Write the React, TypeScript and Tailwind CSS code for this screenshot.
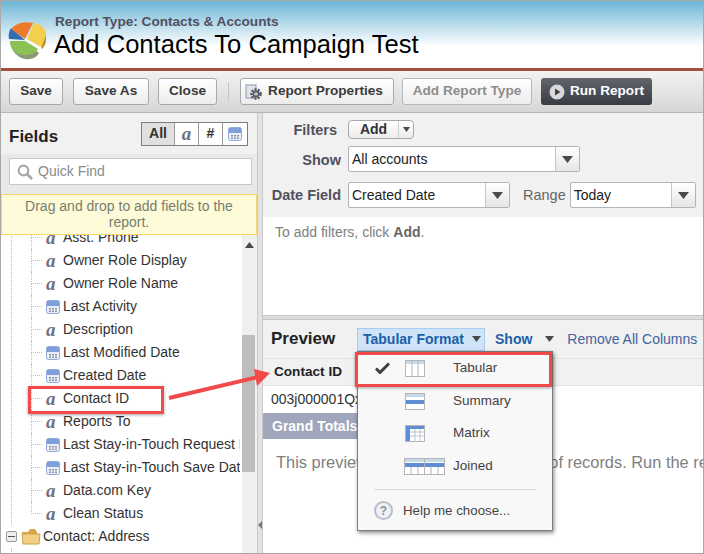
import { ReactNode } from "react";

const fields: { name: string; kind: "text" | "date" }[] = [
  { name: "Asst. Phone", kind: "text" },
  { name: "Owner Role Display", kind: "text" },
  { name: "Owner Role Name", kind: "text" },
  { name: "Last Activity", kind: "date" },
  { name: "Description", kind: "text" },
  { name: "Last Modified Date", kind: "date" },
  { name: "Created Date", kind: "date" },
  { name: "Contact ID", kind: "text" },
  { name: "Reports To", kind: "text" },
  { name: "Last Stay-in-Touch Request Date", kind: "date" },
  { name: "Last Stay-in-Touch Save Date", kind: "date" },
  { name: "Data.com Key", kind: "text" },
  { name: "Clean Status", kind: "text" },
];

function Caret({ className = "" }: { className?: string }) {
  return (
    <svg width="11" height="7" viewBox="0 0 11 7" className={className}>
      <path d="M0 0h11L5.5 7z" fill="#4a4a4a" />
    </svg>
  );
}

function TextIcon() {
  return (
    <span className="font-['Liberation_Serif',serif] text-[19px] leading-none font-bold italic text-[#6d7280]">
      a
    </span>
  );
}

function DateIcon({ size = 14 }: { size?: number }) {
  return (
    <svg width={size} height={size} viewBox="0 0 14 14">
      <rect x="0.5" y="0.5" width="13" height="13" rx="2" fill="#e9eef7" stroke="#8fabdc" />
      <rect x="1" y="1" width="12" height="5" fill="#7f9fd8" />
      <path d="M3 8h2v1.500H3zM6 8h2v1.500H6zM9 8h2v1.500H9zM3 10.500h2V12H3zM6 10.500h2V12H6zM9 10.500h2V12H9z" fill="#8d96a6" />
    </svg>
  );
}

function PieLogo() {
  return (
    <svg width="40" height="39" viewBox="0 0 40 39">
      <path d="M18 22 3 21c1 9 8 16 15 17s12-2 14-6z" fill="#8a9a78" />
      <path d="M18 20 3 20c0 7 6 14 15 14s12-4 13-6z" fill="#8cc153" />
      <path d="M18 19 2 18c-1-4 0-8 2-11z" fill="#2f6fb0" />
      <path d="M18 18 4 8C9 2 17 0 26 2z" fill="#ee7a2c" />
      <path d="m20 18 7-16c7 1 12 6 12 11 0 5-2 10-5 13z" fill="#f4cf4e" />
      <path d="m34 27 5-13v5c0 4-2 7-4 9z" fill="#b99532" />
    </svg>
  );
}

function ToolButton({ children, disabled }: { children: ReactNode; disabled?: boolean }) {
  return (
    <button
      type="button"
      className={`flex h-[27px] w-full items-center justify-center gap-[6px] rounded-[3px] border bg-gradient-to-b from-white to-[#ececec] text-[13.6px] font-bold ${
        disabled ? "border-[#b9b9b9] text-[#8d8d8d]" : "border-[#a9a9a9] text-[#3a3a3a]"
      }`}
    >
      {children}
    </button>
  );
}

function Select({ value, width }: { value: string; width: string }) {
  return (
    <div className={`flex h-[26px] items-stretch rounded-[2px] border border-[#b4b4b4] bg-white ${width}`}>
      <span className="flex-1 pl-[3px] text-[14px] leading-[25px] text-[#222]">{value}</span>
      <span className="flex w-[24px] items-center justify-center border-l border-[#c4c4c4] bg-gradient-to-b from-white to-[#e6e6e6]">
        <Caret />
      </span>
    </div>
  );
}

function FieldRow({ name, kind, last }: { name: string; kind: "text" | "date"; last: boolean }) {
  return (
    <div className="flex h-[23px] items-stretch">
      <div className="flex w-[11px] shrink-0 flex-col">
        <div className="h-[12px] border-b border-l border-dotted border-[#bdbdbd]" />
        {!last && <div className="flex-1 border-l border-dotted border-[#bdbdbd]" />}
      </div>
      <div className="flex items-center gap-[3px] pl-[4px]">
        <span className="flex w-[14px] justify-start">{kind === "text" ? <TextIcon /> : <DateIcon />}</span>
        <span className="whitespace-nowrap text-[14px] text-[#333]">{name}</span>
      </div>
    </div>
  );
}

function TableIcon({ type }: { type: "tabular" | "summary" | "matrix" }) {
  return (
    <svg width="20" height="17" viewBox="0 0 20 17">
      <rect x="0.5" y="0.5" width="19" height="16" fill="#fff" stroke="#b5b5b5" />
      <rect x="1" y="1" width="18" height="3" fill="#c6dbe8" />
      {type === "tabular" && <path d="M7 1v15M13 1v15" stroke="#b5b5b5" />}
      {type === "summary" && <rect x="1" y="7" width="18" height="4" fill="#5f8dd6" />}
      {type === "matrix" && (
        <>
          <rect x="1" y="1" width="18" height="3" fill="#5f8dd6" />
          <rect x="1" y="4" width="4" height="12" fill="#5f8dd6" />
          <path d="M5 7h14M5 11h14M10 4v12M15 4v12" stroke="#b9c6d2" />
        </>
      )}
    </svg>
  );
}

function JoinedIcon() {
  return (
    <svg width="41" height="17" viewBox="0 0 41 17">
      <rect x="0.5" y="0.5" width="40" height="16" fill="#fff" stroke="#b5b5b5" />
      <rect x="1" y="1" width="39" height="3" fill="#c6dbe8" />
      <rect x="1" y="5" width="39" height="4" fill="#5f8dd6" />
      <path d="M7 9v8M14 9v8M20.500 0v17M27 9v8M34 9v8" stroke="#b5b5b5" />
    </svg>
  );
}

function MenuItem({ icon, label, height }: { icon: ReactNode; label: string; height: string }) {
  return (
    <div className={`flex items-center ${height}`}>
      <div className="flex w-[95px] shrink-0 justify-start pl-[47px]">{icon}</div>
      <span className="text-[13.5px] text-[#444]">{label}</span>
    </div>
  );
}

function FormatMenu() {
  return (
    <div className="absolute top-[350px] left-[356px] z-10 h-[180px] w-[196px] border border-[#7c7c7c] bg-[#f8f8f8] shadow-[1px_2px_4px_rgba(0,0,0,0.45)]">
      <div className="relative">
        <svg width="15" height="12" viewBox="0 0 15 12" className="absolute top-[10px] left-[17px]">
          <path d="M1 6.500 5 10.500 14 1.500" fill="none" stroke="#3c3c3c" strokeWidth="3" />
        </svg>
        <MenuItem icon={<TableIcon type="tabular" />} label="Tabular" height="h-[33px]" />
        <MenuItem icon={<TableIcon type="summary" />} label="Summary" height="h-[32px]" />
        <MenuItem icon={<TableIcon type="matrix" />} label="Matrix" height="h-[33px]" />
        <div className="flex h-[32px] items-center">
          <div className="w-[95px] shrink-0 pl-[46px]">
            <JoinedIcon />
          </div>
          <span className="text-[13.5px] text-[#444]">Joined</span>
        </div>
        <div className="mx-[16px] mt-[7px] border-t border-[#dcdcdc]" />
        <div className="mt-[11px] flex items-center gap-[10px] pl-[16px]">
          <span className="flex h-[19px] w-[19px] items-center justify-center rounded-full border-2 border-[#b9bed0] bg-[#f1f1f4] text-[12px] font-bold text-[#8a8fa3]">
            ?
          </span>
          <span className="text-[13.3px] text-[#444]">Help me choose...</span>
        </div>
      </div>
    </div>
  );
}

export default function App() {
  return (
    <div className="relative flex h-[554px] w-[704px] flex-col overflow-hidden border border-[#a8a8a8] bg-white font-['Liberation_Sans',Arial,sans-serif]">
      {/* page header */}
      <div className="flex h-[67px] shrink-0 items-center gap-[8px] bg-gradient-to-b from-[#69b6d5] via-white via-[68%] to-white pt-[12px] pl-[6px]">
        <PieLogo />
        <div className="-mt-[9px]">
          <div className="text-[13.6px] leading-[16px] font-bold text-[#50505f]">Report Type: Contacts &amp; Accounts</div>
          <div className="-ml-[1px] text-[25.6px] leading-[28px] text-black">Add Contacts To Campaign Test</div>
        </div>
      </div>
      <div className="h-[3px] shrink-0 bg-[#a5503f]" />

      {/* toolbar */}
      <div className="flex h-[42px] shrink-0 items-center border-b border-[#b5b5b5] bg-gradient-to-b from-[#f2f2f2] to-[#d6d6d6] pl-[8px]">
        <div className="w-[54px]"><ToolButton>Save</ToolButton></div>
        <div className="ml-[10px] w-[76px]"><ToolButton>Save As</ToolButton></div>
        <div className="ml-[9px] w-[59px]"><ToolButton>Close</ToolButton></div>
        <div className="mx-[11px] h-[18px] border-l border-[#c4c4c4]" />
        <div className="w-[154px]">
          <ToolButton>
            <svg width="17" height="16" viewBox="0 0 17 16">
              <rect x="1" y="1" width="10" height="13" fill="#dfe3ea" stroke="#8d97aa" />
              <circle cx="11" cy="10" r="4.500" fill="none" stroke="#55585f" strokeWidth="2.600" strokeDasharray="2 1.200" />
              <circle cx="11" cy="10" r="2.600" fill="none" stroke="#55585f" strokeWidth="1.600" />
            </svg>
            <span className="pr-[6px]">Report Properties</span>
          </ToolButton>
        </div>
        <div className="ml-[8px] w-[130px]"><ToolButton disabled>Add Report Type</ToolButton></div>
        <button
          type="button"
          className="ml-[9px] flex h-[27px] w-[111px] items-center justify-center gap-[5px] rounded-[3px] bg-gradient-to-b from-[#62656c] to-[#393c44] text-[13.6px] font-bold text-white"
        >
          <svg width="16" height="16" viewBox="0 0 16 16">
            <circle cx="8" cy="8" r="7.500" fill="#d9d9d9" />
            <path d="M6 4.500 11.500 8 6 11.500z" fill="#3e4047" />
          </svg>
          Run Report
        </button>
      </div>

      <div className="flex min-h-0 flex-1">
        {/* fields panel */}
        <div className="flex w-[256px] shrink-0 flex-col">
          <div className="flex h-[41px] shrink-0 items-center justify-between bg-[#f1f1f1] pr-[9px] pl-[8px]">
            <span className="pt-[7px] text-[17px] font-bold text-[#222]">Fields</span>
            <div className="flex h-[24px] border border-[#7e7e7e] bg-white text-[#333]">
              <span className="flex w-[32px] items-center justify-center bg-[#e0e0e0] text-[14px] font-bold">All</span>
              <span className="flex w-[24px] items-center justify-center border-l border-[#9a9a9a]"><TextIcon /></span>
              <span className="flex w-[24px] items-center justify-center border-l border-[#9a9a9a] text-[14px] font-bold">#</span>
              <span className="flex w-[25px] items-center justify-center border-l border-[#9a9a9a]"><DateIcon /></span>
            </div>
          </div>
          <div className="flex h-[40px] shrink-0 items-start bg-[#e9e9e9] pt-[4px] pr-[5px] pl-[8px]">
            <div className="flex h-[27px] w-full items-center gap-[5px] border border-[#c8c8c8] bg-white pl-[7px]">
              <svg width="16" height="16" viewBox="0 0 16 16">
                <circle cx="6.500" cy="6.500" r="4.800" fill="none" stroke="#a8a8a8" strokeWidth="2.200" />
                <path d="m10 10 5 5" stroke="#a8a8a8" strokeWidth="2.600" />
              </svg>
              <span className="text-[14px] text-[#8a8a8a]">Quick Find</span>
            </div>
          </div>
          <div className="h-[41px] shrink-0 border border-[#f5d76e] bg-[#fdfbd8] px-[20px] text-center text-[14px] leading-[16px] text-[#7b7b6f]">
            <div className="pt-[3px]">Drag and drop to add fields to the report.</div>
          </div>
          <div className="flex min-h-0 flex-1">
            <div className="mr-[2px] min-w-0 flex-1 overflow-hidden">
              <div className="-mt-[9px]">
                <div className="ml-[10px] border-l border-dotted border-[#bdbdbd] pl-[19px]">
                  {fields.map((f, i) => (
                    <FieldRow key={f.name} name={f.name} kind={f.kind} last={i === fields.length - 1} />
                  ))}
                </div>
                <div className="flex h-[23px] items-center pl-[5px]">
                  <span className="flex h-[11px] w-[11px] items-center justify-center rounded-[2px] border border-[#9a9a9a] bg-[#eee]">
                    <span className="h-[1px] w-[7px] bg-[#555]" />
                  </span>
                  <svg width="20" height="17" viewBox="0 0 20 17" className="ml-[4px]">
                    <path d="M1 4h6l2-3h5l2 3v2H1z" fill="#d9a64e" />
                    <path d="M1 6h18l-1 10H2z" fill="#f3cf85" stroke="#cf9f4d" />
                  </svg>
                  <span className="ml-[2px] text-[14px] text-[#333]">Contact: Address</span>
                </div>
                <div className="ml-[10px] h-[12px] border-l border-dotted border-[#bdbdbd]" />
              </div>
            </div>
            <div className="w-[15px] shrink-0 bg-[#f0f0f0] pt-[7px]">
              <svg width="9" height="6" viewBox="0 0 9 6" className="mx-auto">
                <path d="M0 6h9L4.500 0z" fill="#4a4a4a" />
              </svg>
              <div className="mt-[87px] h-[137px] w-[13px] bg-[#bdbdbd]" />
            </div>
          </div>
        </div>

        {/* splitter */}
        <div className="flex w-[6px] shrink-0 items-end border-x border-[#c9c9c9] bg-[#e2e2e2] pb-[24px]">
          <svg width="4" height="8" viewBox="0 0 4 8"><path d="M4 0v8L0 4z" fill="#777" /></svg>
        </div>

        {/* report builder */}
        <div className="flex min-w-0 flex-1 flex-col">
          <div className="h-[104px] shrink-0 bg-[#f1f1f1] text-[14.5px]">
            <div className="flex h-[33px] items-center">
              <span className="w-[74px] pt-[3px] text-right font-bold text-[#50505f]">Filters</span>
              <div className="ml-[11px] flex h-[19px] w-[66px] items-stretch rounded-[4px] border border-[#a9a9a9] bg-gradient-to-b from-white to-[#ececec]">
                <span className="flex-1 text-center text-[14px] leading-[16px] font-bold text-[#333]">Add</span>
                <span className="flex w-[15px] items-center justify-center border-l border-[#cfcfcf]">
                  <svg width="7" height="5" viewBox="0 0 7 5"><path d="M0 0h7L3.500 5z" fill="#4a4a4a" /></svg>
                </span>
              </div>
            </div>
            <div className="flex h-[26px] items-center">
              <span className="w-[78px] pt-[3px] text-right font-bold text-[#50505f]">Show</span>
              <div className="ml-[7px]"><Select value="All accounts" width="w-[232px]" /></div>
            </div>
            <div className="mt-[10px] flex h-[26px] items-center">
              <span className="w-[78px] pt-[2px] text-right font-bold text-[#50505f]">Date Field</span>
              <div className="ml-[7px]"><Select value="Created Date" width="w-[162px]" /></div>
              <span className="ml-[13px] pt-[2px] text-[#666]">Range</span>
              <div className="ml-[4px]"><Select value="Today" width="w-[126px]" /></div>
            </div>
          </div>
          <div className="h-[98px] shrink-0 px-[12px] pt-[5px] text-[14px] text-[#808080]">
            To add filters, click <b className="text-[#666]">Add</b>.
          </div>
          <div className="h-[5px] shrink-0 border-y border-[#c6c6c6] bg-[#dcdcdc]" />
          <div className="flex h-[38px] shrink-0 items-center bg-[#f1f1f1] pl-[8px] text-[14px]">
            <span className="w-[86px] text-[17px] font-bold text-[#222]">Preview</span>
            <div className="flex h-[23px] w-[128px] items-center justify-between border border-[#a9cdf0] bg-[#cfe4f9] pr-[3px] pl-[5px]">
              <span className="font-bold text-[#1c5fa6]">Tabular Format</span>
              <svg width="9" height="6" viewBox="0 0 9 6"><path d="M0 0h9L4.500 6z" fill="#4a4a4a" /></svg>
            </div>
            <span className="ml-[10px] font-bold text-[#1c5fa6]">Show</span>
            <svg width="9" height="6" viewBox="0 0 9 6" className="ml-[13px]"><path d="M0 0h9L4.500 6z" fill="#4a4a4a" /></svg>
            <span className="ml-[13px] whitespace-nowrap text-[#44639f]">Remove All Columns</span>
          </div>
          <div className="flex h-[28px] shrink-0 items-center border-y border-[#e2e2e2] bg-[#f1f1f1] pl-[11px] text-[13.6px] font-bold text-[#222]">
            Contact ID
          </div>
          <div className="flex h-[27px] w-[120px] shrink-0 items-center pl-[8px] text-[14px] whitespace-nowrap text-[#333]">
            003j000001QxYz
          </div>
          <div className="flex h-[26px] w-[120px] shrink-0 items-center bg-[#a0a6bb] pl-[9px] text-[14px] font-bold whitespace-nowrap text-white">
            Grand Totals
          </div>
          <div className="overflow-hidden pt-[11px] pl-[13px] text-[16.4px] whitespace-nowrap text-[#808080]">
            This preview shows a limited number of records. Run the report to see all results.
          </div>
        </div>
      </div>

      <FormatMenu />

      {/* annotations */}
      <div className="absolute top-[351px] left-[354px] z-20 h-[35px] w-[197px] border-[3px] border-[#f04a4a] shadow-[0_1px_3px_rgba(0,0,0,0.35)]" />
      <div className="absolute top-[385px] left-[27px] z-20 h-[28px] w-[136px] border-[3px] border-[#f04a4a] shadow-[0_1px_3px_rgba(0,0,0,0.35)]" />
      <svg width="112" height="34" viewBox="0 0 112 34" className="absolute top-[368px] left-[165px] z-20 overflow-visible">
        <path d="M3 29 92 8" stroke="#f04a4a" strokeWidth="4" />
        <path d="M104 4 88 0l3 17z" fill="#f04a4a" />
      </svg>
    </div>
  );
}
